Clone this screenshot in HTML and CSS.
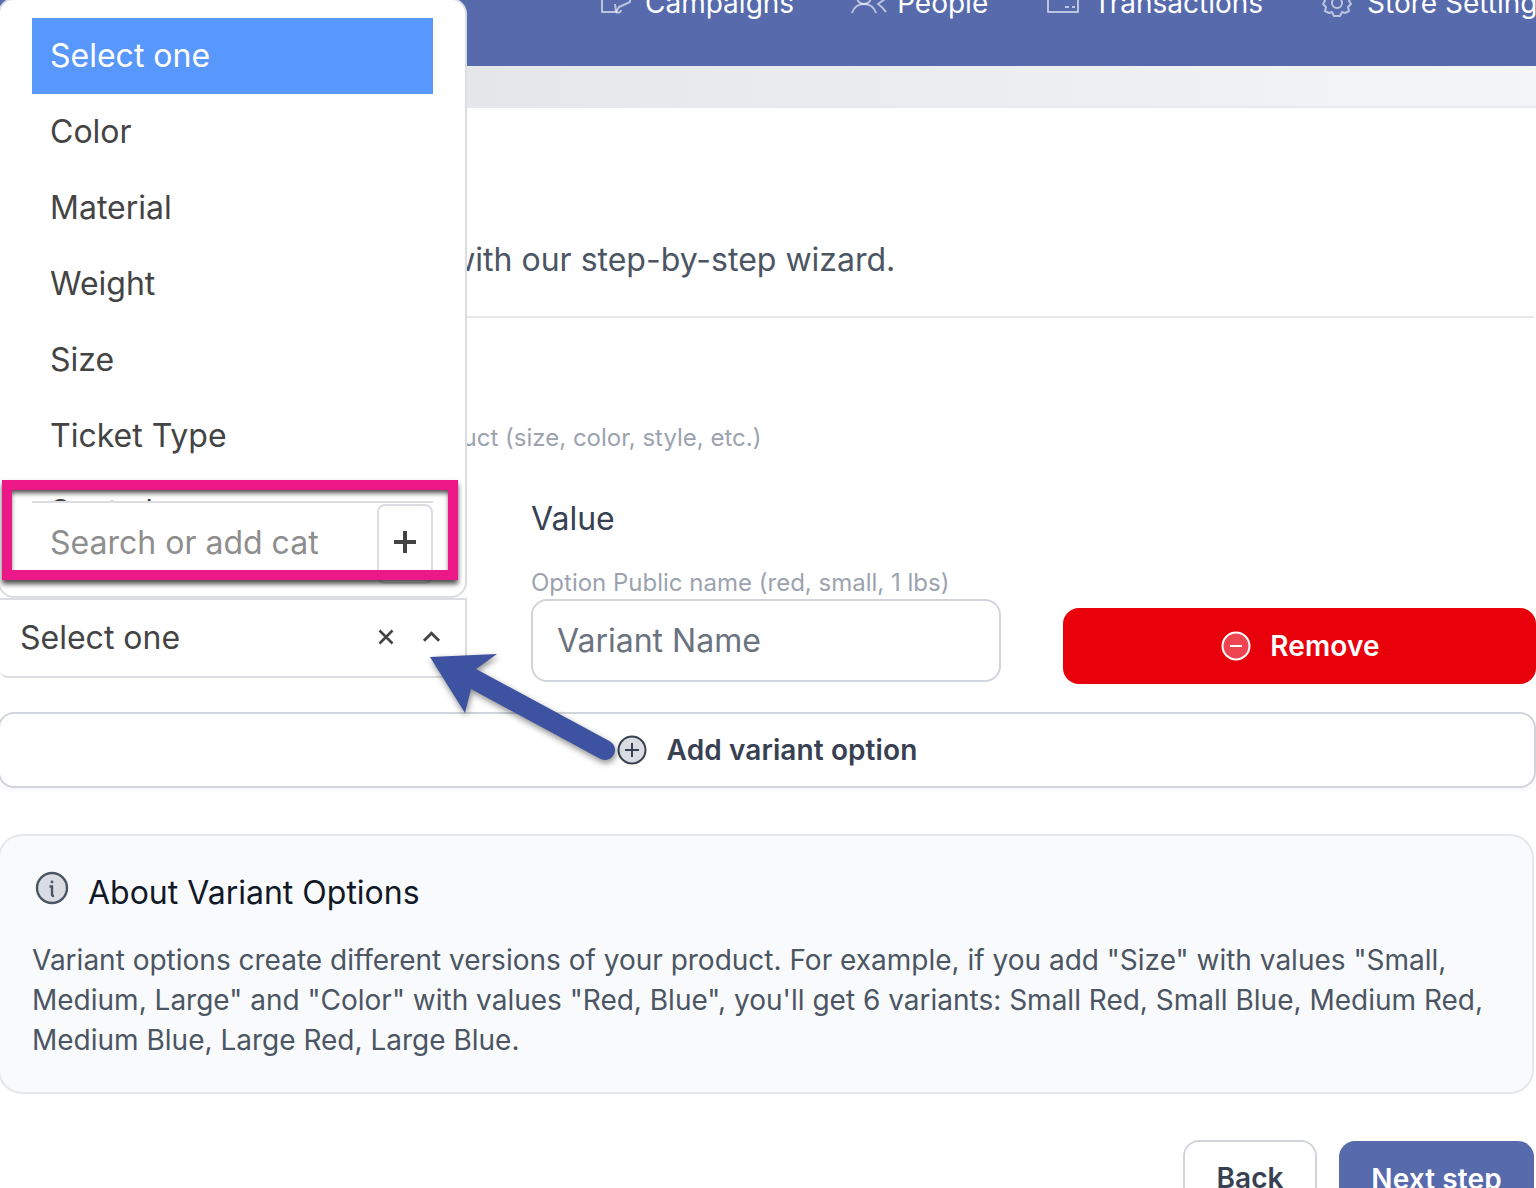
FILE: index.html
```html
<!DOCTYPE html>
<html lang="en">
<head>
<meta charset="utf-8">
<title>Add product</title>
<link rel="stylesheet" href="styles.css">
</head>
<body>
<div class="page">
  <header class="nav">
    <a class="nav-item nav-campaigns"><svg class="nav-icon" viewBox="0 -13 32 32"><path d="M2 -6V12H16L19 7 30 2V-6"/><path d="M16 12L15 4"/><path d="M16 12c2 1 5 1 5-2"/></svg>Campaigns</a>
    <a class="nav-item nav-people"><svg class="nav-icon nav-icon-wide" viewBox="0 -13 36 32"><circle cx="13" cy="-3" r="7"/><path d="M1 13c2-6 6-9 12-9s10 3 12 9"/><path d="M34 -1l-7 5c3 2 6 5 8 8"/></svg>People</a>
    <a class="nav-item nav-transactions"><svg class="nav-icon" viewBox="0 -13 32 32"><path d="M1 -6V12H31V-6"/><path d="M18 7h4M25 7h3"/></svg>Transactions</a>
    <a class="nav-item nav-settings"><svg class="nav-icon" viewBox="0 -13 32 32"><circle cx="15" cy="3" r="5"/><path d="M1 -3l2 4-2 3 3 3-1 4 4 2 3-1 2 4h6l2-4 3 1 4-2-1-4 3-3-2-3 2-4"/></svg>Store Settings</a>
  </header>
  <div class="subbar"></div>

  <main class="content">
    <section class="intro">
      <p class="intro-text">Create a product with our step-by-step wizard.</p>
    </section>

    <section class="variants">
      <p class="variants-hint">Add options for your product (size, color, style, etc.)</p>
      <div class="variant-row">
        <div class="select-col">
          <div class="select">
            <span>Select one</span>
            <span class="select-icons">
              <svg class="icon-x" viewBox="0 0 16 16"><path d="M1.5 1.5l13 13M14.5 1.5l-13 13"/></svg>
              <svg class="icon-chev" viewBox="0 0 20 12"><path d="M2 10l8-8 8 8"/></svg>
            </span>
          </div>
        </div>
        <div class="value-col">
          <label class="value-label">Value</label>
          <span class="value-help">Option Public name (red, small, 1 lbs)</span>
          <div class="text-input">Variant Name</div>
        </div>
        <button class="btn-remove">
          <svg class="icon-28" viewBox="0 0 30 30"><circle cx="15" cy="15" r="13.5"/><path d="M9 15h12"/></svg>
          Remove
        </button>
      </div>
      <button class="btn-add">
        <svg class="icon-28" viewBox="0 0 30 30"><circle cx="15" cy="15" r="13.5"/><path d="M15 8v14M8 15h14"/></svg>
        Add variant option
      </button>
    </section>

    <section class="about">
      <h3 class="about-title">
        <svg class="icon-info" viewBox="0 0 34 34"><circle cx="17" cy="17" r="15"/><circle class="dot" cx="17" cy="11" r="1.4"/><path d="M14.5 15.5h2.5v8c0 1 .8 1.6 2 1.2"/></svg>
        About Variant Options
      </h3>
      <p class="about-text">Variant options create different versions of your product. For example, if you add "Size" with values "Small, Medium, Large" and "Color" with values "Red, Blue", you'll get 6 variants: Small Red, Small Blue, Medium Red, Medium Blue, Large Red, Large Blue.</p>
    </section>

    <div class="actions">
      <button class="btn-back">Back</button>
      <button class="btn-next">Next step</button>
    </div>
  </main>

  <div class="dropdown">
    <ul class="options">
      <li class="option is-active">Select one</li>
      <li class="option">Color</li>
      <li class="option">Material</li>
      <li class="option">Weight</li>
      <li class="option">Size</li>
      <li class="option">Ticket Type</li>
      <li class="option">Seat class</li>
    </ul>
    <div class="search">
      <span class="search-text">Search or add cat</span>
      <span class="search-add"><svg viewBox="0 0 24 24"><path d="M12 1v22M1 12h22"/></svg></span>
    </div>
  </div>

  <div class="highlight"></div>

  <svg class="arrow" viewBox="0 0 200 130">
    <path class="arrow-head" d="M10 17L77 14 56 29 45 73Z"/>
    <path class="arrow-shaft" d="M48 36L185 110"/>
  </svg>
</div>
</body>
</html>
```

FILE: styles.css
```css
* { box-sizing: border-box; }
html, body { margin: 0; padding: 0; }
body {
  font-family: Inter, "Noto Sans", sans-serif;
  background: #fff;
  color: #374151;
}
.page {
  position: relative;
  width: 1536px;
  height: 1188px;
  overflow: hidden;
  background: #fff;
}

/* top nav */
.nav {
  height: 66px;
  background: #566aac;
  display: flex;
  align-items: flex-start;
  padding-left: 600px;
  white-space: nowrap;
  color: #fff;
  font-size: 28px;
  line-height: 32px;
}
.nav-item {
  display: flex;
  align-items: center;
  gap: 13px;
  margin-top: -13px;
}
.nav-people { margin-left: 57px; gap: 10px; }
.nav-transactions { margin-left: 59px; gap: 14px; }
.nav-settings { margin-left: 59px; }
.nav-icon {
  width: 32px;
  height: 32px;
  fill: none;
  stroke: rgba(255, 255, 255, .6);
  stroke-width: 2;
  stroke-linejoin: round;
  overflow: hidden;
}
.nav-icon-wide { width: 36px; }
.subbar {
  height: 42px;
  background: linear-gradient(90deg, #dfe0e5, #f4f5f6);
  border-bottom: 2px solid #e8e9ed;
}

/* main */
.content { display: flex; flex-direction: column; }
.intro {
  padding-top: 132px;
  padding-bottom: 36px;
  margin-right: 2px;
  border-bottom: 2px solid #e5e7eb;
}
.intro-text {
  margin: 0;
  padding-left: 186px;
  font-size: 32px;
  line-height: 40px;
  color: #4b5563;
}
.variants-hint {
  margin: 102px 0 0;
  padding-left: 171px;
  font-size: 24px;
  line-height: 36px;
  color: #9ca3af;
  white-space: nowrap;
}
.variant-row {
  display: flex;
  align-items: flex-end;
  height: 185px;
  margin-top: 43px;
}
.select-col { width: 467px; margin-bottom: 6px; }
.select {
  height: 80px;
  display: flex;
  align-items: center;
  justify-content: space-between;
  padding: 0 24px 2px 20px;
  border: 2px solid #dcdde3;
  border-left: 0;
  border-bottom-left-radius: 8px;
  font-size: 32px;
  color: #444;
  background: #fff;
}
.select-icons { display: flex; align-items: center; gap: 28px; }
.icon-x { width: 16px; height: 16px; fill: none; stroke: #444; stroke-width: 2.6; }
.icon-chev { width: 19px; height: 12px; fill: none; stroke: #444; stroke-width: 3; }
.value-col {
  width: 470px;
  margin-left: 64px;
  margin-bottom: 2px;
  display: flex;
  flex-direction: column;
}
.value-label { font-size: 32px; line-height: 40px; color: #374151; }
.value-help {
  margin-top: 28px;
  font-size: 24px;
  line-height: 32px;
  color: #9ca3af;
  white-space: nowrap;
}
.text-input {
  height: 83px;
  padding-left: 24px;
  display: flex;
  align-items: center;
  border: 2px solid #d1d5db;
  border-radius: 16px;
  font-size: 32px;
  color: #6b7280;
  background: #fff;
}
.btn-remove {
  width: 473px;
  height: 76px;
  margin-left: 62px;
  display: flex;
  align-items: center;
  justify-content: center;
  gap: 19px;
  padding: 0 0 0 2px;
  border: 0;
  border-radius: 16px;
  background: #e8000b;
  color: #fff;
  font: 600 28px/32px Inter, sans-serif;
  letter-spacing: .1px;
}
.icon-28 { width: 30px; height: 30px; stroke-width: 2; }
.btn-remove .icon-28 { fill: #ef4452; stroke: #fff; }
.btn-add {
  width: 1538px;
  height: 76px;
  margin: 28px 0 0 -2px;
  display: flex;
  align-items: center;
  justify-content: center;
  gap: 20px;
  padding: 0;
  border: 2px solid #d1d5db;
  border-radius: 16px;
  background: #fff;
  color: #374151;
  font: 600 28px/32px Inter, sans-serif;
  letter-spacing: .1px;
  box-shadow: 0 2px 4px rgba(0, 0, 0, .04);
}
.btn-add .icon-28 { fill: #d9dce3; stroke: #374151; }

/* about */
.about {
  height: 260px;
  margin: 46px 2px 0 -2px;
  padding: 35px 32px 0 32px;
  border: 2px solid #e5e7eb;
  border-radius: 24px;
  background: #f9fafb;
}
.about-title {
  margin: 0;
  display: flex;
  align-items: center;
  gap: 19px;
  font-size: 32px;
  font-weight: 400;
  line-height: 44px;
  color: #111827;
}
.icon-info { width: 34px; height: 34px; margin: -10px 0 0 3px; fill: #d9dce3; stroke: #4b5563; stroke-width: 2.4; }
.icon-info .dot { fill: #4b5563; stroke: none; }
.about-text {
  margin: 25px 0 0;
  font-size: 28px;
  line-height: 40px;
  color: #4b5563;
}

/* actions */
.actions {
  display: flex;
  justify-content: flex-end;
  align-items: flex-start;
  gap: 22px;
  margin-top: 46px;
  padding-right: 2px;
}
.btn-back, .btn-next {
  height: 76px;
  padding: 0;
  border-radius: 16px;
  font: 600 28px/32px Inter, sans-serif;
  letter-spacing: .1px;
}
.btn-back {
  width: 134px;
  border: 2px solid #d1d5db;
  background: #fff;
  color: #374151;
}
.btn-next {
  width: 195px;
  margin-top: 1px;
  border: 0;
  background: #566aac;
  color: #fff;
}

/* dropdown overlay */
.dropdown {
  position: absolute;
  left: -2px;
  top: -2px;
  width: 469px;
  height: 600px;
  padding: 18px 32px 0 32px;
  background: #fff;
  border: 2px solid #dcdde3;
  border-radius: 16px;
  overflow: hidden;
}
.options { margin: 0; padding: 0; list-style: none; }
.option {
  height: 76px;
  display: flex;
  align-items: center;
  padding: 0 0 1px 18px;
  font-size: 32px;
  color: #444;
}
.option.is-active { background: #5897fb; color: #fff; }
.search {
  position: absolute;
  left: 32px;
  right: 32px;
  top: 501px;
  height: 100px;
  display: flex;
  justify-content: space-between;
  background: #fff;
  border-top: 2px solid #dcdde3;
}
.search-text {
  padding: 20px 0 0 18px;
  font-size: 32px;
  line-height: 40px;
  color: #8e8e8e;
}
.search-add {
  width: 56px;
  height: 80px;
  margin-top: 1px;
  display: flex;
  justify-content: center;
  padding-top: 24px;
  border: 2px solid #dcdde3;
  border-radius: 8px;
}
.search-add svg { width: 24px; height: 24px; fill: none; stroke: #444; stroke-width: 4; }

/* annotations */
.highlight {
  position: absolute;
  left: 2px;
  top: 480px;
  width: 456px;
  height: 100px;
  border: 10px solid #ec1887;
  box-shadow: 0 4px 5px rgba(0, 0, 0, .7), inset 0 4px 5px -1px rgba(0, 0, 0, .7);
}
.arrow {
  position: absolute;
  left: 420px;
  top: 640px;
  width: 200px;
  height: 130px;
  overflow: visible;
  filter: drop-shadow(1px 3px 3px rgba(0, 0, 0, .45));
}
.arrow-head { fill: #3d52a0; }
.arrow-shaft { fill: none; stroke: #3d52a0; stroke-width: 20; stroke-linecap: round; }
```
